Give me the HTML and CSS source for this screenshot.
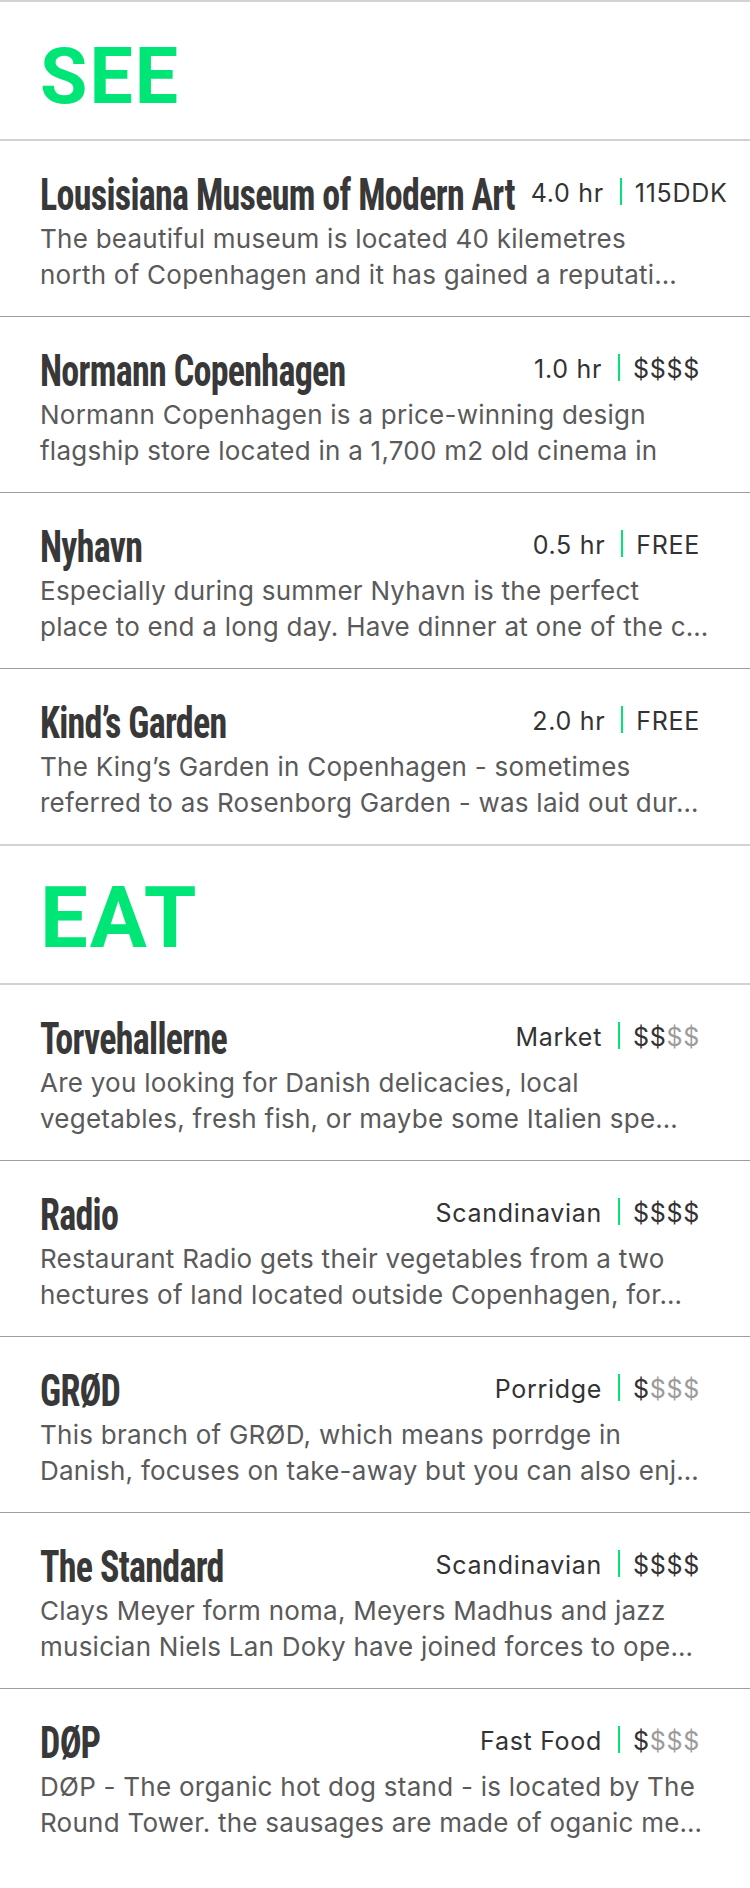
FILE: index.html
```html
<!DOCTYPE html>
<html lang="en">
<head>
<meta charset="utf-8">
<title>Copenhagen guide</title>
<link rel="stylesheet" href="styles.css">
</head>
<body>
<main class="guide">
  <section class="section">
    <header class="section-head"><h2 class="section-title">SEE</h2></header>
    <ul class="places">
      <li class="place">
        <div class="place-row">
          <h3 class="place-name"><span>Lousisiana Museum of Modern Art</span></h3>
          <div class="place-meta"><span class="meta-text">4.0 hr</span><span class="sep"></span><span class="meta-text">115DDK</span></div>
        </div>
        <p class="place-desc">The beautiful museum is located 40 kilemetres<br>north of Copenhagen and it has gained a reputati…</p>
      </li>
      <li class="place">
        <div class="place-row">
          <h3 class="place-name"><span>Normann Copenhagen</span></h3>
          <div class="place-meta"><span class="meta-text">1.0 hr</span><span class="sep"></span><span class="meta-text">$$$$</span></div>
        </div>
        <p class="place-desc">Normann Copenhagen is a price-winning design<br>flagship store located in a 1,700 m2 old cinema in</p>
      </li>
      <li class="place">
        <div class="place-row">
          <h3 class="place-name"><span>Nyhavn</span></h3>
          <div class="place-meta"><span class="meta-text">0.5 hr</span><span class="sep"></span><span class="meta-text">FREE</span></div>
        </div>
        <p class="place-desc">Especially during summer Nyhavn is the perfect<br>place to end a long day. Have dinner at one of the c…</p>
      </li>
      <li class="place">
        <div class="place-row">
          <h3 class="place-name"><span>Kind’s Garden</span></h3>
          <div class="place-meta"><span class="meta-text">2.0 hr</span><span class="sep"></span><span class="meta-text">FREE</span></div>
        </div>
        <p class="place-desc">The King’s Garden in Copenhagen - sometimes<br>referred to as Rosenborg Garden - was laid out dur…</p>
      </li>
    </ul>
  </section>
  <section class="section">
    <header class="section-head"><h2 class="section-title section-title--eat">EAT</h2></header>
    <ul class="places">
      <li class="place">
        <div class="place-row">
          <h3 class="place-name"><span>Torvehallerne</span></h3>
          <div class="place-meta"><span class="meta-text">Market</span><span class="sep"></span><span class="meta-text">$$<span class="dim">$$</span></span></div>
        </div>
        <p class="place-desc">Are you looking for Danish delicacies, local<br>vegetables, fresh fish, or maybe some Italien spe…</p>
      </li>
      <li class="place">
        <div class="place-row">
          <h3 class="place-name"><span>Radio</span></h3>
          <div class="place-meta"><span class="meta-text">Scandinavian</span><span class="sep"></span><span class="meta-text">$$$$</span></div>
        </div>
        <p class="place-desc">Restaurant Radio gets their vegetables from a two<br>hectures of land located outside Copenhagen, for…</p>
      </li>
      <li class="place">
        <div class="place-row">
          <h3 class="place-name"><span>GRØD</span></h3>
          <div class="place-meta"><span class="meta-text">Porridge</span><span class="sep"></span><span class="meta-text">$<span class="dim">$$$</span></span></div>
        </div>
        <p class="place-desc">This branch of GRØD, which means porrdge in<br>Danish, focuses on take-away but you can also enj…</p>
      </li>
      <li class="place">
        <div class="place-row">
          <h3 class="place-name"><span>The Standard</span></h3>
          <div class="place-meta"><span class="meta-text">Scandinavian</span><span class="sep"></span><span class="meta-text">$$$$</span></div>
        </div>
        <p class="place-desc">Clays Meyer form noma, Meyers Madhus and jazz<br>musician Niels Lan Doky have joined forces to ope…</p>
      </li>
      <li class="place">
        <div class="place-row">
          <h3 class="place-name"><span>DØP</span></h3>
          <div class="place-meta"><span class="meta-text">Fast Food</span><span class="sep"></span><span class="meta-text">$<span class="dim">$$$</span></span></div>
        </div>
        <p class="place-desc">DØP - The organic hot dog stand - is located by The<br>Round Tower. the sausages are made of oganic me…</p>
      </li>
    </ul>
  </section>
</main>
</body>
</html>
```
FILE: styles.css
```css
html, body {
  margin: 0;
  padding: 0;
  background: #ffffff;
}

.guide {
  font-family: Inter, "Liberation Sans", sans-serif;
}

.section-head {
  height: 137px;
  padding: 0 40px;
  border-top: 2px solid #d2d2d2;
  border-bottom: 2px solid #d2d2d2;
}

.section-title {
  margin: 0;
  padding-top: 37px;
  font-family: Roboto, "Liberation Sans", sans-serif;
  font-weight: 700;
  font-size: 77px;
  line-height: 77px;
  letter-spacing: 2px;
  color: #00e676;
}

.section-title--eat {
  padding-top: 30px;
  font-size: 85px;
  line-height: 85px;
}

.places {
  list-style: none;
  margin: 0;
  padding: 0;
}

.place {
  padding: 37px 50px 23px 40px;
}

.place + .place {
  border-top: 1px solid #9e9e9e;
}

.place-row {
  display: flex;
  align-items: flex-start;
  height: 40px;
}

.place-name {
  flex-shrink: 0;
  margin: 0;
  font-family: "Roboto Condensed", Roboto, sans-serif;
  font-stretch: 75%;
  font-weight: 700;
  font-size: 36px;
  line-height: 40px;
  letter-spacing: -0.7px;
  color: #383838;
  white-space: nowrap;
}

.place-name span {
  display: inline-block;
  transform: scaleY(1.25);
  transform-origin: 0 32px;
}

.place-meta {
  flex-shrink: 0;
  display: flex;
  align-items: flex-start;
  margin-left: auto;
  padding-left: 16px;
  font-size: 25px;
  line-height: 27px;
  letter-spacing: 0.7px;
  color: #333333;
  white-space: nowrap;
}

.meta-text {
  margin-top: 2px;
}

.sep {
  width: 2px;
  height: 27px;
  margin: 0 13px 0 16px;
  background: #00e676;
}

.dim {
  color: #9b9b9b;
}

.place-desc {
  margin: 3px 0 0;
  font-size: 26px;
  line-height: 36px;
  letter-spacing: 0.25px;
  color: #5a5a5a;
  white-space: nowrap;
}
```
